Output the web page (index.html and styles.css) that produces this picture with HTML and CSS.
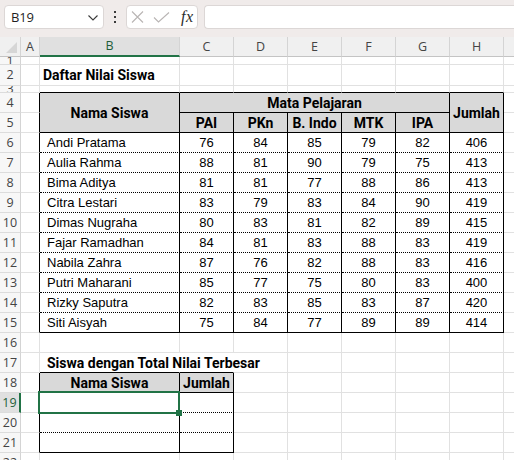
FILE: index.html
```html
<!DOCTYPE html>
<html>
<head>
<meta charset="utf-8">
<link rel="stylesheet" href="styles.css">
</head>
<body>
<div class="fbar">
  <div class="namebox">
    <span class="nbtext">B19</span>
    <svg class="chev" width="12" height="8" viewBox="0 0 12 8"><path d="M1.5 1.5 L6 6 L10.5 1.5" stroke="#3a3a3a" stroke-width="1.1" fill="none"/></svg>
  </div>
  <div class="vdots"><i></i><i></i><i></i></div>
  <div class="fxbox">
    <svg width="13" height="12" viewBox="0 0 13 12"><path d="M1 0.5 L12 11.5 M12 0.5 L1 11.5" stroke="#b9b5b4" stroke-width="1.1" fill="none"/></svg>
    <svg width="17" height="11" viewBox="0 0 17 11"><path d="M1 5.5 L5.5 10 L16 0.5" stroke="#b9b5b4" stroke-width="1.1" fill="none"/></svg>
    <span class="fx">fx</span>
  </div>
  <div class="finput"></div>
</div>
<table class="sheet">
  <colgroup>
    <col class="c-rh"><col class="c-a"><col class="c-b">
    <col class="c-n"><col class="c-n"><col class="c-n"><col class="c-n"><col class="c-n"><col class="c-n">
    <col class="c-i">
  </colgroup>
  <tr class="colhdr">
    <td class="corner"><span class="tri"></span></td>
    <td>A</td><td class="selc">B</td><td>C</td><td>D</td><td>E</td><td>F</td><td>G</td><td>H</td><td></td>
  </tr>
  <tr class="r1">
    <td class="rh"><div class="clip7">1</div></td><td></td><td></td><td></td><td></td><td></td><td></td><td></td><td></td><td></td>
  </tr>
  <tr class="r2">
    <td class="rh">2</td><td></td><td class="title">Daftar Nilai Siswa</td><td></td><td></td><td></td><td></td><td></td><td></td><td></td>
  </tr>
  <tr class="r3">
    <td class="rh"><div class="clip6">3</div></td><td></td><td class="bt"></td><td class="bt"></td><td class="bt"></td><td class="bt"></td><td class="bt"></td><td class="bt"></td><td class="bt"></td><td></td>
  </tr>
  <tr class="r">
    <td class="rh">4</td><td class="ra"></td><td class="h" rowspan="2">Nama Siswa</td><td class="h" colspan="5">Mata Pelajaran</td><td class="h" rowspan="2">Jumlah</td><td></td>
  </tr>
  <tr class="r">
    <td class="rh">5</td><td class="ra"></td><td class="h">PAI</td><td class="h">PKn</td><td class="h">B. Indo</td><td class="h">MTK</td><td class="h">IPA</td><td></td>
  </tr>
  <tr class="r"><td class="rh">6</td><td class="ra"></td><td class="d nm">Andi Pratama</td><td class="d">76</td><td class="d">84</td><td class="d">85</td><td class="d">79</td><td class="d">82</td><td class="d">406</td><td></td></tr>
  <tr class="r"><td class="rh">7</td><td class="ra"></td><td class="d nm">Aulia Rahma</td><td class="d">88</td><td class="d">81</td><td class="d">90</td><td class="d">79</td><td class="d">75</td><td class="d">413</td><td></td></tr>
  <tr class="r"><td class="rh">8</td><td class="ra"></td><td class="d nm">Bima Aditya</td><td class="d">81</td><td class="d">81</td><td class="d">77</td><td class="d">88</td><td class="d">86</td><td class="d">413</td><td></td></tr>
  <tr class="r"><td class="rh">9</td><td class="ra"></td><td class="d nm">Citra Lestari</td><td class="d">83</td><td class="d">79</td><td class="d">83</td><td class="d">84</td><td class="d">90</td><td class="d">419</td><td></td></tr>
  <tr class="r"><td class="rh">10</td><td class="ra"></td><td class="d nm">Dimas Nugraha</td><td class="d">80</td><td class="d">83</td><td class="d">81</td><td class="d">82</td><td class="d">89</td><td class="d">415</td><td></td></tr>
  <tr class="r"><td class="rh">11</td><td class="ra"></td><td class="d nm">Fajar Ramadhan</td><td class="d">84</td><td class="d">81</td><td class="d">83</td><td class="d">88</td><td class="d">83</td><td class="d">419</td><td></td></tr>
  <tr class="r"><td class="rh">12</td><td class="ra"></td><td class="d nm">Nabila Zahra</td><td class="d">87</td><td class="d">76</td><td class="d">82</td><td class="d">88</td><td class="d">83</td><td class="d">416</td><td></td></tr>
  <tr class="r"><td class="rh">13</td><td class="ra"></td><td class="d nm">Putri Maharani</td><td class="d">85</td><td class="d">77</td><td class="d">75</td><td class="d">80</td><td class="d">83</td><td class="d">400</td><td></td></tr>
  <tr class="r"><td class="rh">14</td><td class="ra"></td><td class="d nm">Rizky Saputra</td><td class="d">82</td><td class="d">83</td><td class="d">85</td><td class="d">83</td><td class="d">87</td><td class="d">420</td><td></td></tr>
  <tr class="r"><td class="rh">15</td><td class="ra"></td><td class="d nm last">Siti Aisyah</td><td class="d last">75</td><td class="d last">84</td><td class="d last">77</td><td class="d last">89</td><td class="d last">89</td><td class="d last">414</td><td></td></tr>
  <tr class="r"><td class="rh">16</td><td></td><td></td><td></td><td></td><td></td><td></td><td></td><td></td><td></td></tr>
  <tr class="r"><td class="rh">17</td><td></td><td class="title sub bt ov">Siswa dengan Total Nilai Terbesar</td><td class="bt ov"></td><td></td><td></td><td></td><td></td><td></td><td></td></tr>
  <tr class="r"><td class="rh">18</td><td class="ra"></td><td class="h">Nama Siswa</td><td class="h">Jumlah</td><td></td><td></td><td></td><td></td><td></td><td></td></tr>
  <tr class="r"><td class="rh selr">19</td><td class="ra"></td><td class="d active"><div class="selbox"><span class="handle"></span></div></td><td class="d"></td><td></td><td></td><td></td><td></td><td></td><td></td></tr>
  <tr class="r"><td class="rh">20</td><td class="ra"></td><td class="d"></td><td class="d"></td><td></td><td></td><td></td><td></td><td></td><td></td></tr>
  <tr class="r"><td class="rh">21</td><td class="ra"></td><td class="d last"></td><td class="d last"></td><td></td><td></td><td></td><td></td><td></td><td></td></tr>
  <tr class="r"><td class="rh">22</td><td></td><td></td><td></td><td></td><td></td><td></td><td></td><td></td><td></td></tr>
</table>
</body>
</html>
```

FILE: styles.css
```css
html, body {
  margin: 0;
  padding: 0;
  width: 514px;
  height: 460px;
  overflow: hidden;
  background: #ffffff;
}

.fbar {
  height: 37px;
  background: #f0ebea;
  display: flex;
  align-items: flex-start;
  padding: 5px 0 0 4px;
  box-sizing: border-box;
}

.namebox {
  width: 100px;
  height: 24px;
  box-sizing: border-box;
  background: #fff;
  border: 1px solid #dcd7d6;
  border-radius: 4px;
  display: flex;
  align-items: center;
  justify-content: space-between;
  padding: 0 4px 0 6px;
}

.nbtext {
  font-family: "Segoe UI", "Open Sans", "Noto Sans", sans-serif;
  font-size: 13px;
  color: #1f1f1f;
  letter-spacing: -0.2px;
}

.chev { margin-top: 1px; }

.vdots {
  width: 22px;
  height: 24px;
  display: flex;
  flex-direction: column;
  align-items: center;
  justify-content: center;
  gap: 3px;
}

.vdots i {
  display: block;
  width: 2px;
  height: 2px;
  background: #3a3a3a;
}

.fxbox {
  width: 72px;
  height: 24px;
  box-sizing: border-box;
  background: #fff;
  border: 1px solid #dcd7d6;
  border-radius: 4px;
  display: flex;
  align-items: center;
  padding: 0 0 0 4px;
  gap: 9px;
}

.fx {
  font-family: "Liberation Serif", "DejaVu Serif", serif;
  font-style: italic;
  font-size: 16px;
  color: #2b2b2b;
  margin-left: 2px;
  letter-spacing: 0.5px;
}

.finput {
  flex: 1;
  height: 24px;
  box-sizing: border-box;
  background: #fff;
  border: 1px solid #dcd7d6;
  border-right: none;
  border-radius: 4px 0 0 4px;
  margin-left: 6px;
}

.sheet {
  border-collapse: separate;
  border-spacing: 0;
  table-layout: fixed;
  width: 538px;
}

.c-rh { width: 21px; }
.c-a { width: 19px; }
.c-b { width: 140px; }
.c-n { width: 54px; }
.c-i { width: 34px; }

.sheet td {
  box-sizing: border-box;
  padding: 0;
  border-right: 1px solid #e1e1e1;
  border-bottom: 1px solid #e1e1e1;
  font-family: "Liberation Sans", Arial, sans-serif;
  font-size: 13px;
  color: #000;
  white-space: nowrap;
  overflow: hidden;
  vertical-align: middle;
  line-height: 16px;
}

.colhdr td {
  height: 20px;
  background: #f0f0f0;
  border-right: 1px solid #d4d4d4;
  border-bottom: 1px solid #c4c4c4;
  text-align: center;
  font-family: "Segoe UI", "Open Sans", "Noto Sans", sans-serif;
  font-size: 12.5px;
  color: #444;
}

.colhdr td.selc {
  background: #e0e0e0;
  border-bottom: 2px solid #217346;
  color: #1e5e3a;
}

.colhdr td.corner {
  position: relative;
  background: #f0f0f0;
}

.tri {
  position: absolute;
  right: 3px;
  bottom: 3px;
  width: 0;
  height: 0;
  border-left: 11px solid transparent;
  border-bottom: 11px solid #d6d6d6;
}

.r1 td { height: 8px; }
.r2 td { height: 21px; }
.r3 td { height: 7px; }
.r td { height: 20px; }

.clip7 { height: 7px; overflow: hidden; line-height: 7px; }
.clip6 { height: 6px; overflow: hidden; line-height: 6px; }

.sheet td.rh {
  background: #f7f7f7;
  border-right: 1px solid #d4d4d4;
  border-bottom: 1px solid #dcdcdc;
  text-align: center;
  font-family: "Segoe UI", "Open Sans", "Noto Sans", sans-serif;
  font-size: 12.5px;
  color: #444;
}

.sheet td.rh.selr {
  background: #e0e0e0;
  border-right: 2px solid #217346;
  color: #1e5e3a;
}

.sheet td.ra { border-right-color: #000; }
.sheet td.bt { border-bottom-color: #000; }
.sheet td.ov { overflow: visible; border-right-color: transparent; }

.sheet td.title {
  font-family: Roboto, "Liberation Sans", sans-serif;
  font-weight: 700;
  font-size: 14px;
  padding-left: 3px;
}

.sheet td.title.sub { padding-left: 7px; }

.sheet td.h {
  background: #d9d9d9;
  border-right: 1px solid #000;
  border-bottom: 1px solid #000;
  text-align: center;
  font-family: Roboto, "Liberation Sans", sans-serif;
  font-weight: 700;
  font-size: 14px;
}

.sheet td.d {
  border-right: 1px solid #000;
  border-bottom: 1px dotted #000;
  text-align: center;
}

.sheet td.d.nm {
  text-align: left;
  padding-left: 7px;
}

.sheet td.d.last { border-bottom-style: solid; }

.sheet td.active {
  position: relative;
  overflow: visible;
}

.selbox {
  position: absolute;
  left: -2px;
  top: -2px;
  width: 142px;
  height: 23px;
  box-sizing: border-box;
  border: 2px solid #217346;
}

.handle {
  position: absolute;
  right: -4px;
  bottom: -4px;
  width: 6px;
  height: 6px;
  box-sizing: border-box;
  background: #217346;
}
```
